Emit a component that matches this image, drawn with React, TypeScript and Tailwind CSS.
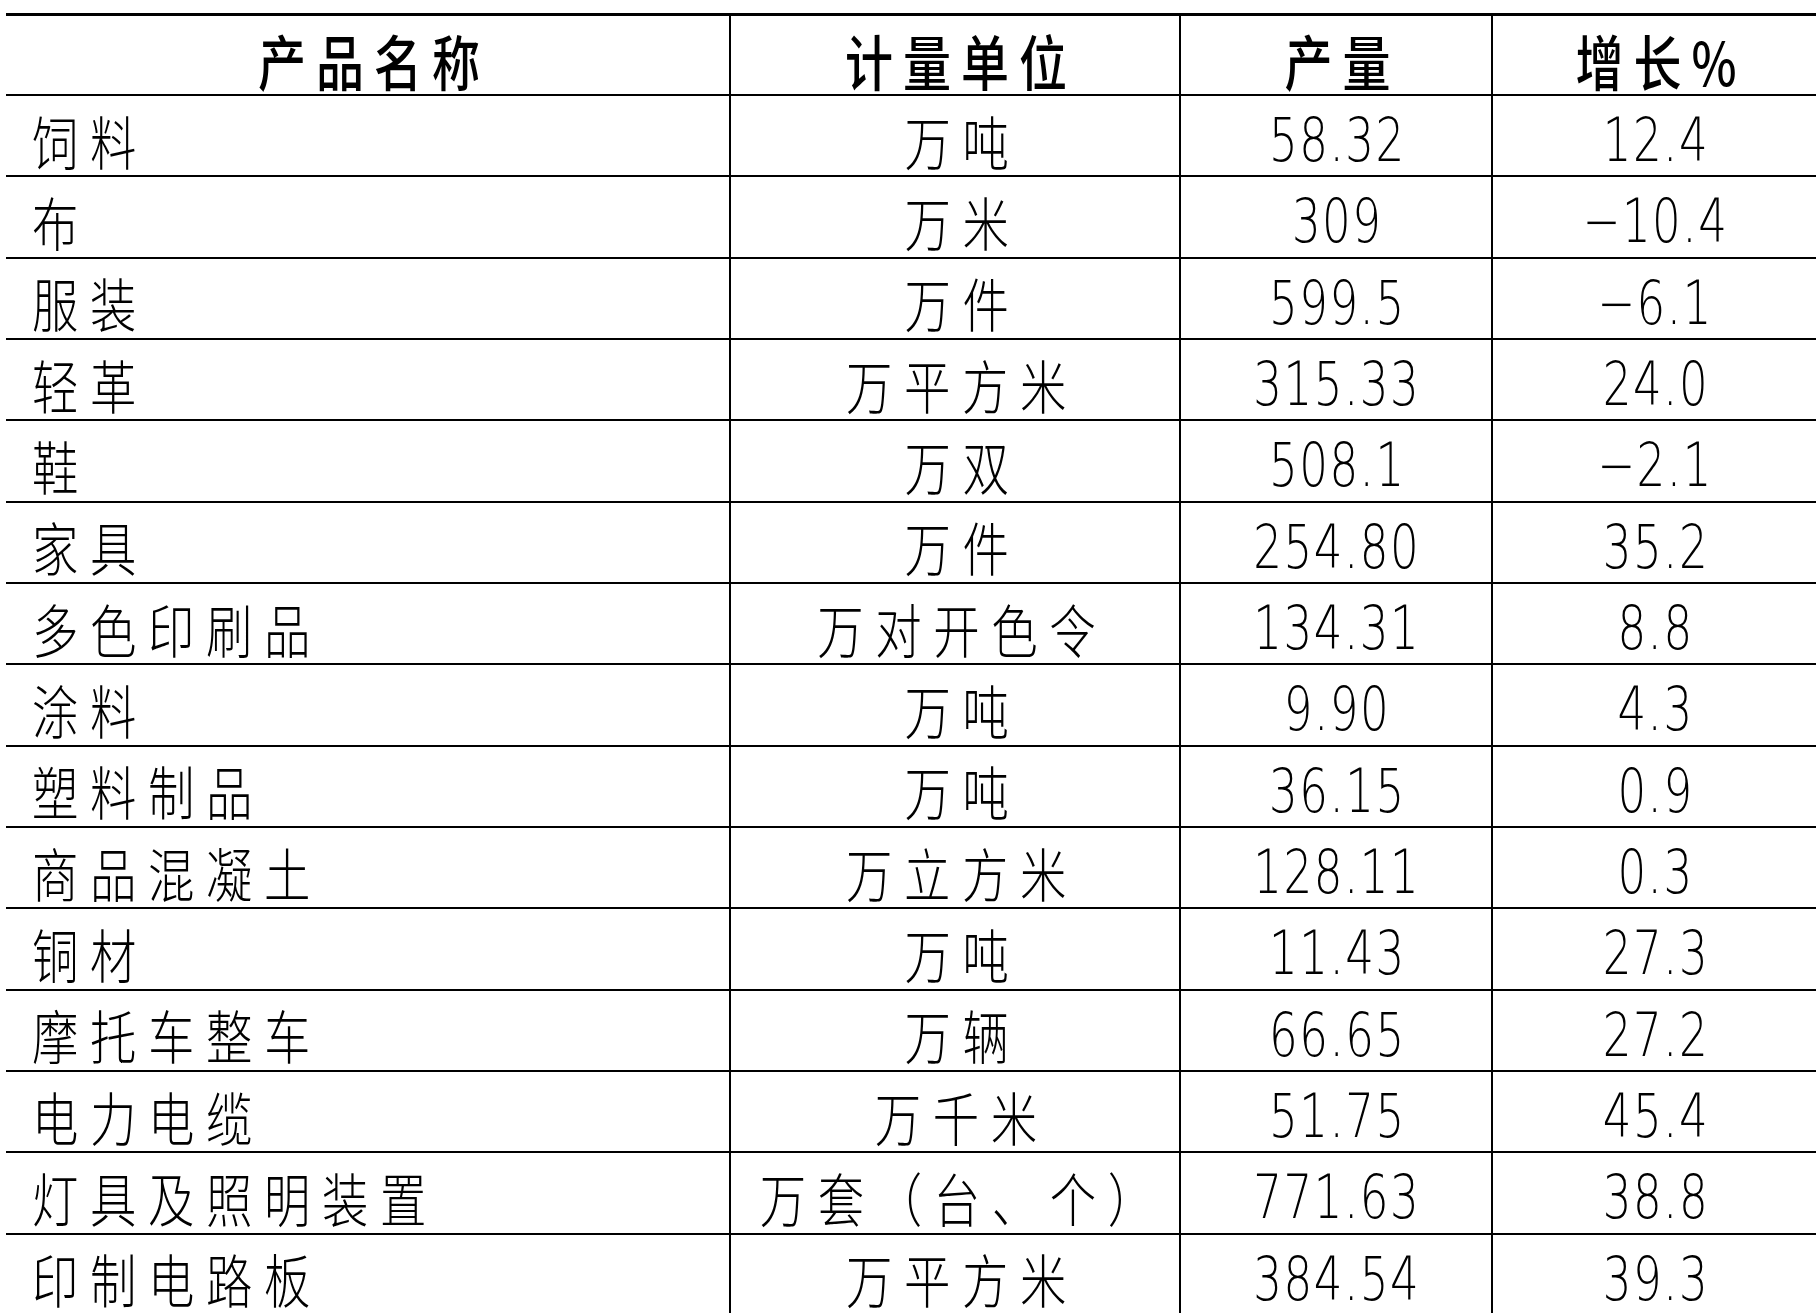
const rows = [
  ["饲料", "万吨", "58.32", "12.4"],
  ["布", "万米", "309", "−10.4"],
  ["服装", "万件", "599.5", "−6.1"],
  ["轻革", "万平方米", "315.33", "24.0"],
  ["鞋", "万双", "508.1", "−2.1"],
  ["家具", "万件", "254.80", "35.2"],
  ["多色印刷品", "万对开色令", "134.31", "8.8"],
  ["涂料", "万吨", "9.90", "4.3"],
  ["塑料制品", "万吨", "36.15", "0.9"],
  ["商品混凝土", "万立方米", "128.11", "0.3"],
  ["铜材", "万吨", "11.43", "27.3"],
  ["摩托车整车", "万辆", "66.65", "27.2"],
  ["电力电缆", "万千米", "51.75", "45.4"],
  ["灯具及照明装置", "万套（台、个）", "771.63", "38.8"],
  ["印制电路板", "万平方米", "384.54", "39.3"],
]

const cjk = "inline-block whitespace-nowrap leading-none font-light text-[58px] tracking-[14.5px] scale-x-[0.8] font-['Noto_Sans_CJK_SC',sans-serif]"
const num = "inline-block whitespace-nowrap leading-none font-extralight text-[61px] tracking-[2px] scale-x-[0.74] font-['DejaVu_Sans',sans-serif]"
const head = "inline-block whitespace-nowrap leading-none font-medium text-[60px] tracking-[12.5px] -mr-[12.5px] scale-x-[0.8] font-['Noto_Sans_CJK_SC',sans-serif]"

export default function App() {
  return (
    <div className="min-h-screen bg-white pt-[13px] pl-[6px] text-black overflow-hidden">
      <div className="border-t-[3px] border-black">
        <div className="flex h-[80px] border-b-2 border-black">
          <div className="w-[725px] border-r-2 border-black flex items-center justify-center pt-[9px]">
            <span className={head}>产品名称</span>
          </div>
          <div className="w-[450px] border-r-2 border-black flex items-center justify-center pt-[9px]">
            <span className={head}>计量单位</span>
          </div>
          <div className="w-[312px] border-r-2 border-black flex items-center justify-center pt-[9px]">
            <span className={head}>产量</span>
          </div>
          <div className="flex-1 flex items-center justify-center pt-[9px]">
            <span className={head}>增长%</span>
          </div>
        </div>
        {rows.map(([name, unit, output, growth]) => (
          <div key={name} className="flex h-[81.33px] border-b-2 border-black">
            <div className="w-[725px] border-r-2 border-black flex items-center pl-[26px] pt-[8px]">
              <span className={`${cjk} origin-left`}>{name}</span>
            </div>
            <div className="w-[450px] border-r-2 border-black flex items-center justify-center pt-[8px]">
              <span className={`${cjk} -mr-[14.5px]`}>{unit}</span>
            </div>
            <div className="w-[312px] border-r-2 border-black flex items-center justify-center pt-[8px]">
              <span className={`${num} -mr-[2px]`}>{output}</span>
            </div>
            <div className="flex-1 flex items-center justify-center pt-[8px]">
              <span className={`${num} -mr-[2px]`}>{growth}</span>
            </div>
          </div>
        ))}
      </div>
    </div>
  )
}
